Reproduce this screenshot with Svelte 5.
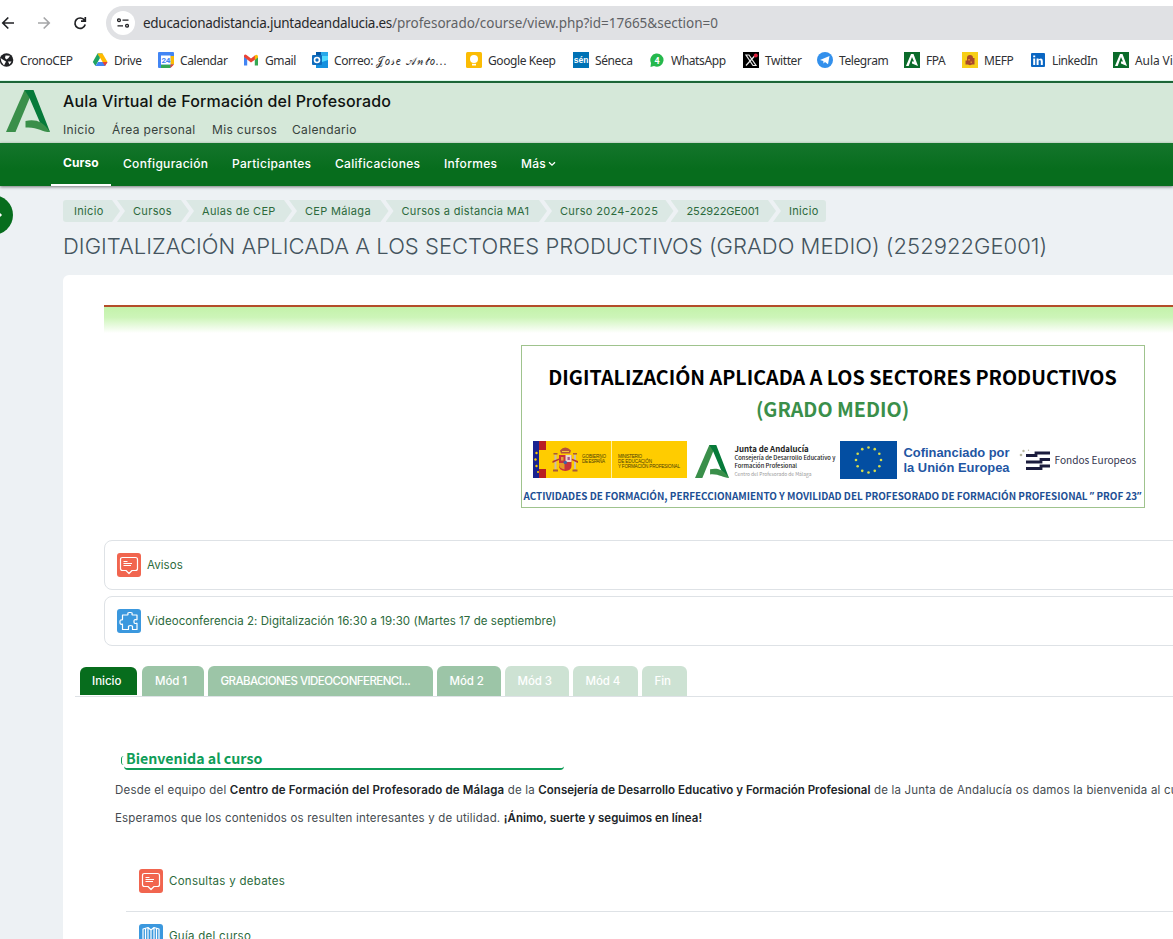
<script lang="ts">
  interface Bookmark {
    icon: string;
    label: string;
    width: number;
    script?: string;
  }

  const bookmarks: Bookmark[] = [
    { icon: "globe", label: "CronoCEP", width: 94 },
    { icon: "drive", label: "Drive", width: 66 },
    { icon: "calendar", label: "Calendar", width: 85 },
    { icon: "gmail", label: "Gmail", width: 69 },
    { icon: "outlook", label: "Correo: ", script: "𝒥𝑜𝓈𝑒 𝒜𝓃𝓉𝑜...", width: 154 },
    { icon: "keep", label: "Google Keep", width: 107 },
    { icon: "seneca", label: "Séneca", width: 76 },
    { icon: "whatsapp", label: "WhatsApp", width: 94 },
    { icon: "x", label: "Twitter", width: 74 },
    { icon: "telegram", label: "Telegram", width: 87 },
    { icon: "junta", label: "FPA", width: 58 },
    { icon: "mefp", label: "MEFP", width: 68 },
    { icon: "linkedin", label: "LinkedIn", width: 83 },
    { icon: "junta", label: "Aula Virtual", width: 90 },
  ];

  const url = {
    host: "educacionadistancia.juntadeandalucia.es",
    path: "/profesorado/course/view.php?id=17665&section=0",
  };

  const siteLinks = [
    { label: "Inicio", width: 49 },
    { label: "Área personal", width: 100 },
    { label: "Mis cursos", width: 80 },
    { label: "Calendario", width: 80 },
  ];

  const courseNav = [
    { label: "Curso", width: 60 },
    { label: "Configuración", width: 109 },
    { label: "Participantes", width: 103 },
    { label: "Calificaciones", width: 109 },
    { label: "Informes", width: 77 },
    { label: "Más", width: 60 },
  ];

  const crumbs = [
    { label: "Inicio", width: 57 },
    { label: "Cursos", width: 72 },
    { label: "Aulas de CEP", width: 106 },
    { label: "CEP Málaga", width: 99.5 },
    { label: "Cursos a distancia MA1", width: 161.5 },
    { label: "Curso 2024-2025", width: 129.5 },
    { label: "252922GE001", width: 105.5 },
    { label: "Inicio", width: 53 },
  ];

  const tabs = [
    { label: "Inicio", width: 57, kind: "active" },
    { label: "Mód 1", width: 61.5, kind: "" },
    { label: "GRABACIONES VIDEOCONFERENCI...", width: 225, kind: "long" },
    { label: "Mód 2", width: 64, kind: "" },
    { label: "Mód 3", width: 64, kind: "dimmed" },
    { label: "Mód 4", width: 65, kind: "dimmed" },
    { label: "Fin", width: 45, kind: "dimmed" },
  ];

  const stars = Array.from({ length: 12 }, (_, i) => {
    const a = (i * Math.PI) / 6;
    return { x: 28.5 + 12.5 * Math.sin(a), y: 19 - 12.5 * Math.cos(a) };
  });
</script>

{#snippet junta()}
  <path d="M18.500 0H27L9.500 42H0z" fill="#3a8f4a" />
  <path d="M18.500 0H27.500L44 42 35.500 36 23 7z" fill="#067a3a" />
  <path d="M19.500 31C29 29 37 31 44 42C36 42 31 36.500 19.500 37.500z" fill="#3a8f4a" />
{/snippet}

{#snippet favicon(name: string)}
  <svg class="favicon" viewBox="0 0 16 16">
    {#if name === "globe"}
      <circle cx="8.500" cy="8" r="6.800" fill="#202124" />
      <path d="M2.500 6 5.500 8 8 9.500 6 13.500 3.500 10zM7.500 3.500 12 3.800 10.500 6 8.500 7.500 7 6z" fill="#fff" />
      <path d="M10 9.500 13.500 9.500 11.500 12.500z" fill="#fff" />
    {:else if name === "drive"}
      <path d="M5.500 1.500H10.500L8 6z" fill="#1e9b50" />
      <path d="M5.500 1.500 8 6 3.500 14 .8 10z" fill="#1ea362" />
      <path d="M10.500 1.500 15.500 10H10.600L5.500 1.500z" fill="#ffba00" />
      <path d="M15.500 10 13 14H3.500L6 10z" fill="#4285f4" />
      <path d="M15.500 10 13 14 10.500 10z" fill="#ea4335" />
    {:else if name === "calendar"}
      <path d="M0 1Q0 0 1 0H15Q16 0 16 1V12L12 16H1Q0 16 0 15z" fill="#4285f4" />
      <path d="M3 12.500H12.500V16H3z" fill="#34a853" />
      <path d="M12.500 4H16V12.500H12.500z" fill="#fbbc04" />
      <path d="M12.500 12.500H16L12.500 16z" fill="#ea4335" />
      <path d="M3 3.500H12.500V12.500H3z" fill="#fff" />
      <text x="7.800" y="10.800" class="i-date">24</text>
    {:else if name === "gmail"}
      <path d="M1 13.500V4.500L4.200 7V13.500z" fill="#4285f4" />
      <path d="M11.800 13.500V7L15 4.500V13.500z" fill="#34a853" />
      <path d="M1 5V3.500Q2 1.800 3.800 3.200L8 6.500 12.200 3.200 12.200 7.500 8 10.500 4.200 7.500z" fill="#ea4335" />
      <path d="M11.800 3.500Q14.500 1.500 15 4.500V5.500L11.800 8z" fill="#fbbc04" />
    {:else if name === "outlook"}
      <path d="M4 0H16V14H4z" fill="#28a8ea" />
      <path d="M9 4H16V10H9z" fill="#50d9ff" />
      <path d="M4 0H9V5H4z" fill="#0358a7" />
      <path d="M4 12 16 8V16H4z" fill="#1490df" />
      <rect y="3" width="10" height="10" rx="1" fill="#0f6cbd" />
      <circle cx="5" cy="8" r="2.500" fill="none" stroke="#fff" stroke-width="1.600" />
    {:else if name === "keep"}
      <rect width="16" height="16" rx="1.500" fill="#fbbc04" />
      <circle cx="8" cy="7" r="4" fill="#fff" />
      <path d="M6 11.800H10V13.500H6z" fill="#fff" />
    {:else if name === "seneca"}
      <path d="M0 0H16V16H0z" fill="#0072b5" />
      <text x="8" y="10.500" class="i-sen">sén</text>
    {:else if name === "whatsapp"}
      <path d="M1.500 15 2 11A6.600 6.600 0 1 1 5 14z" fill="#25b84c" />
      <text x="8" y="11.500" class="i-count">4</text>
    {:else if name === "x"}
      <path d="M0 0H16V16H0z" fill="#000" />
      <path d="M3 3H6L13 13.500H10zM12.500 3 3 13.500" fill="none" stroke="#e8e8e8" stroke-width="1.200" />
      <circle cx="12.800" cy="3.500" r="2" fill="#e0203c" />
    {:else if name === "telegram"}
      <circle cx="8" cy="8" r="8" fill="#3390ec" />
      <path d="M3 8 12.500 4 11 12.300 8 10 6.500 11.500 6.300 9z" fill="#fff" />
    {:else if name === "junta"}
      <path d="M0 0H16V16H0z" fill="#0a6b2a" />
      <path d="M7 2H9.500L14 14 8 11.500V9.500L10 9.600 8 5 4.700 14H2z" fill="#fff" />
    {:else if name === "mefp"}
      <path d="M0 0H16V16H0z" fill="#f7cf17" />
      <path d="M5 6Q5 3 8 3Q11 3 11 6H12.500V12.500H10Q8 14 6 12.500H3.500V8.500H5z" fill="#a8492b" />
      <path d="M6 7H8V8.500H6zM8.500 9.500H10V11H8.500z" fill="#d9872b" />
    {:else if name === "linkedin"}
      <rect x="1" y="1" width="14" height="14" rx="1" fill="#0a66c2" />
      <path d="M3.200 6.500H5.200V13H3.200zM3.200 3.500H5.200V5.300H3.200zM6.600 6.500H8.500V7.400Q12.800 5 12.800 9V13H10.800V9.500Q10.800 7 8.600 8.500V13H6.600z" fill="#fff" />
    {/if}
  </svg>
{/snippet}

{#snippet activityIcon(kind: string)}
  <svg class="activity-icon" viewBox="0 0 24 24">
    <rect width="24" height="24" rx="3" fill={kind === "forum" ? "#f1654f" : "#3b98de"} />
    <g fill="none" stroke="#fff" stroke-width="1.200" stroke-linejoin="round">
      {#if kind === "forum"}
        <path d="M5.500 4.500H18.500Q20.500 4.500 20.500 6.500V15.500Q20.500 17.500 18.500 17.500H15L12 20.500 9 17.500H5.500Q3.500 17.500 3.500 15.500V6.500Q3.500 4.500 5.500 4.500zM6.500 8.500H10.500M6.500 10.500H15M6.500 12.500H14" />
      {:else if kind === "puzzle"}
        <path d="M5.500 6H10.500Q11 6 11 5.300Q10.300 3.500 12.500 3.500H13.500Q15.700 3.500 15 5.300Q15 6 15.500 6H20V10.500Q20 11 19.500 10.800Q17 10 17 12V13Q17 15 19.500 14.300Q20 14 20 14.700V20.500H15.500V18.500Q16 16.500 13.500 16.500Q11 16.500 11.500 18.500V20.500H5.500V15.500Q5.500 15 4.800 15.200Q3 15.700 3 13.500V12.500Q3 10.500 4.800 11Q5.500 11 5.500 10.500z" />
      {:else}
        <path d="M4 20V5L9 3.500 12 6 15 3.500 20 5V20L15 18.500 12 20.500 9 18.500zM6.500 4.500V19M9 3.500V18.500M12 6V20M15 3.500V18.500M17.500 4.500V19" />
      {/if}
    </g>
  </svg>
{/snippet}

<div class="window">
  <div class="toolbar">
    <svg class="nav-icons" viewBox="0 0 92 16" fill="none" stroke-width="1.700">
      <path d="M14 8H3M8.300 2.500 2.800 8 8.300 13.500" stroke="#202124" />
      <path d="M38 8H49M43.700 2.500 49.200 8 43.700 13.500" stroke="#a5a6a8" />
      <path d="M84.500 5.300A5.200 5.200 0 1 0 85.200 9.500M85.300 2V6.200H81" stroke="#202124" />
    </svg>
    <div class="address">
      <span class="site-info">
        <svg viewBox="0 0 12 10" fill="none" stroke="#202124" stroke-width="1.300">
          <circle cx="2" cy="2.200" r="1.400" />
          <path d="M5.500 2.200H11.500M.5 7.800H6" />
          <circle cx="10" cy="7.800" r="1.400" />
        </svg>
      </span>
      <span class="url"><b>{url.host}</b>{url.path}</span>
    </div>
  </div>

  <div class="bookmarks">
    {#each bookmarks as bookmark}
      <div class="bookmark" style:width="{bookmark.width}px">
        {@render favicon(bookmark.icon)}
        <span>{bookmark.label}{#if bookmark.script}<i>{bookmark.script}</i>{/if}</span>
      </div>
    {/each}
  </div>

  <header class="site-header">
    <svg class="site-logo" viewBox="0 0 44 42">{@render junta()}</svg>
    <div>
      <div class="site-title">Aula Virtual de Formación del Profesorado</div>
      <nav class="site-links">
        {#each siteLinks as link}
          <span style:width="{link.width}px">{link.label}</span>
        {/each}
      </nav>
    </div>
  </header>

  <nav class="course-nav">
    {#each courseNav as item, i}
      <div class="course-link" class:active={i === 0} style:width="{item.width}px">
        <span>{item.label}</span>
        {#if item.label === "Más"}
          <svg class="caret" viewBox="0 0 8 6"><path d="M1 1.200 4 4.200 7 1.200" fill="none" stroke="#fff" stroke-width="1.300" /></svg>
        {/if}
      </div>
    {/each}
  </nav>

  <div class="page">
    <div class="drawer-toggle">
      <svg viewBox="0 0 6 8"><path d="M1 1 4 4 1 7" fill="none" stroke="#fff" stroke-width="1.500" /></svg>
    </div>

    <div class="breadcrumb">
      {#each crumbs as crumb, i}
        <div class="crumb" class:first={i === 0} class:last={i === crumbs.length - 1} style:width="{crumb.width}px">
          <span>{crumb.label}</span>
        </div>
      {/each}
    </div>

    <h1>DIGITALIZACIÓN APLICADA A LOS SECTORES PRODUCTIVOS (GRADO MEDIO) (252922GE001)</h1>

    <main class="card">
      <div class="stripe"></div>

      <div class="banner">
        <div class="banner-title">DIGITALIZACIÓN APLICADA A LOS SECTORES PRODUCTIVOS</div>
        <div class="banner-level">(GRADO MEDIO)</div>
        <div class="logos">
          <svg class="gob" viewBox="0 0 154 37">
            <path d="M0 0H154V37H0z" fill="#fc0" />
            <path d="M0 0H6V37H0z" fill="#1a2390" />
            <path d="M6 0H13V9H6zM6 28H13V37H6z" fill="#b81f24" />
            <g fill="#fc0"><circle cx="3.500" cy="12" r="1.200" /><circle cx="2.500" cy="18.500" r="1.200" /><circle cx="3.500" cy="25" r="1.200" /><circle cx="5" cy="31" r="1" /></g>
            <path d="M78.500 0V37" stroke="#fff0a0" stroke-width="1" />
            <path d="M27 9.500Q32 3.500 38 9.500L37 12.500H28z" fill="#b5533a" />
            <path d="M29 10.500H36" stroke="#f3c43a" />
            <path d="M21.500 14H23.500V28H21.500zM41 14H43V28H41z" fill="#c9bcae" />
            <path d="M20 28.500H25V30.500H20zM39.500 28.500H44.500V30.500H39.500zM20.500 12H24.500V13.500H20.500zM40 12H44V13.500H40z" fill="#a85a3a" />
            <path d="M19.500 20 26 17.500V19L19.500 22zM38.500 17.500 45 20V22L38.500 19z" fill="#b33a34" />
            <path d="M26 14H38.500V25Q38.500 29.500 32.300 30Q26 29.500 26 25z" fill="#c8323a" />
            <path d="M32.500 14H38.500V21H32.500z" fill="#ead6d0" />
            <path d="M26 22H31.500V28.500Q26 27 26 24z" fill="#e59a24" />
            <path d="M28 16H30.500V19.500H28z" fill="#e3a33a" />
            <path d="M34.500 16H36.800V19H34.500z" fill="#a8568a" />
            <circle cx="32.300" cy="21.500" r="1.800" fill="#4462a0" />
            <text x="49" y="17" textLength="24">GOBIERNO</text>
            <text x="49" y="22.300" textLength="23">DE ESPAÑA</text>
            <text x="85" y="17" textLength="24">MINISTERIO</text>
            <text x="85" y="22" textLength="34">DE EDUCACIÓN</text>
            <text x="85" y="26.800" textLength="62">Y FORMACIÓN PROFESIONAL</text>
          </svg>
          <svg class="junta-logo" viewBox="0 0 44 42" preserveAspectRatio="none">{@render junta()}</svg>
          <div class="junta-text">
            <strong>Junta de Andalucía</strong>
            <span>Consejería de Desarrollo Educativo y</span>
            <span>Formación Profesional</span>
            <em>Centro del Profesorado de Málaga</em>
          </div>
          <svg class="eu" viewBox="0 0 57 38">
            <path d="M0 0H57V38H0z" fill="#034ea2" />
            {#each stars as star}
              <circle cx={star.x} cy={star.y} r="1.300" fill="#d8dd4a" />
            {/each}
          </svg>
          <div class="eu-text">Cofinanciado por<br />la Unión Europea</div>
          <svg class="fondos" viewBox="0 0 32 22">
            <g fill="none" stroke="#1b1c3d" stroke-width="2.800">
              <path d="M7 6.500H17V4H31M7 13H22V10.500H31M7 19.500H22V17H31" />
            </g>
            <g fill="#b9b8a0"><circle cx="2" cy="6" r="1.300" /><circle cx="4.500" cy="2" r="1.200" /><circle cx="9.500" cy="1.200" r=".7" /></g>
          </svg>
          <div class="fondos-text">Fondos Europeos</div>
        </div>
        <div class="banner-foot">ACTIVIDADES DE FORMACIÓN, PERFECCIONAMIENTO Y MOVILIDAD DEL PROFESORADO DE FORMACIÓN PROFESIONAL <q>”</q> PROF 23<q>”</q></div>
      </div>

      <div class="activity">
        {@render activityIcon("forum")}
        <span>Avisos</span>
      </div>
      <div class="activity">
        {@render activityIcon("puzzle")}
        <span>Videoconferencia 2: Digitalización 16:30 a 19:30 (Martes 17 de septiembre)</span>
      </div>

      <div class="tabs">
        {#each tabs as tab}
          <div class="tab {tab.kind}" style:width="{tab.width}px">{tab.label}</div>
        {/each}
      </div>

      <section class="welcome">
        <h2>Bienvenida al curso</h2>
        <p>
          Desde el equipo del <b class="center">Centro de Formación del Profesorado de Málaga</b> de la <b>Consejería de Desarrollo Educativo y Formación Profesional</b> de la Junta de Andalucía os damos la bienvenida al curso
        </p>
        <p class="outro">
          Esperamos que los contenidos os resulten interesantes y de utilidad. <b>¡Ánimo, suerte y seguimos en línea!</b>
        </p>
        <div class="row">
          {@render activityIcon("forum")}
          <span>Consultas y debates</span>
        </div>
        <div class="row">
          {@render activityIcon("book")}
          <span>Guía del curso</span>
        </div>
      </section>
    </main>
  </div>
</div>

<style>
  :global(body) {
    background: #fff;
    overflow: hidden;
  }

  .window {
    width: 1173px;
    height: 939px;
    overflow: hidden;
    font-family: Inter, "Open Sans", sans-serif;
    white-space: nowrap;
  }

  svg {
    display: block;
    flex: none;
  }

  .toolbar {
    display: flex;
    height: 34px;
    padding-top: 6px;
    align-items: center;
  }

  .nav-icons {
    width: 92px;
    height: 16px;
    margin-right: 14px;
  }

  .address {
    flex: 1;
    height: 34px;
    display: flex;
    align-items: center;
    background: #e0e1e4;
    border-radius: 17px 0 0 17px;
    font-family: "Noto Sans", sans-serif;
    font-size: 13.5px;
    letter-spacing: -0.02px;
    color: #5f6165;
  }

  .site-info {
    width: 24px;
    height: 24px;
    margin: 0 8px 0 5px;
    background: #fff;
    border-radius: 50%;
    display: grid;
    place-items: center;
  }

  .site-info svg {
    width: 12px;
    height: 10px;
  }

  .url b {
    font-weight: 400;
    letter-spacing: -0.28px;
    color: #28292b;
  }

  .bookmarks {
    display: flex;
    height: 40px;
    margin-left: -2px;
    align-items: center;
    border-bottom: 1px solid #e0faee;
    font-family: "Noto Sans", sans-serif;
    font-size: 12px;
    letter-spacing: -0.4px;
    color: #303134;
  }

  .bookmark {
    display: flex;
    align-items: center;
    gap: 6px;
    flex: none;
  }

  .bookmark:last-child {
    letter-spacing: -0.1px;
  }

  .bookmark i {
    font-style: normal;
    font-size: 11px;
    letter-spacing: 1px;
  }

  .favicon {
    width: 16px;
    height: 16px;
  }

  .i-date {
    font: 700 8px Roboto, sans-serif;
    fill: #4285f4;
    text-anchor: middle;
  }

  .i-sen {
    font: 700 8.5px "Liberation Sans", sans-serif;
    fill: #fff;
    text-anchor: middle;
    letter-spacing: 0;
  }

  .i-count {
    font: 700 9px Roboto, sans-serif;
    fill: #fff;
    text-anchor: middle;
  }

  .site-header {
    height: 60px;
    border-top: 2px solid #1c6638;
    background: #d5e8d9;
    display: flex;
    gap: 13px;
  }

  .site-logo {
    width: 44px;
    height: 42px;
    margin: 7px 0 0 6px;
  }

  .site-title {
    margin-top: 7px;
    line-height: 22px;
    font-size: 16px;
    letter-spacing: 0.13px;
    font-weight: 500;
    color: #101411;
  }

  .site-links {
    display: flex;
    margin-top: 9px;
    line-height: 18px;
    font-size: 12px;
    letter-spacing: 0.35px;
    color: #37423c;
  }

  .site-links span {
    flex: none;
  }

  .course-nav {
    position: relative;
    height: 43px;
    padding-left: 51px;
    display: flex;
    background: linear-gradient(#14752c, #076d1d 60%);
    box-shadow: 0 1px 3px rgba(0, 0, 0, 0.5);
    color: #fff;
    font-size: 12px;
    letter-spacing: 0.3px;
    font-weight: 500;
    z-index: 1;
  }

  .course-link {
    box-sizing: border-box;
    height: 43px;
    flex: none;
    padding: 0 0 2px 12px;
    display: flex;
    align-items: center;
    gap: 2px;
  }

  .course-link.active {
    border-bottom: 2px solid #fff;
    font-weight: 700;
    letter-spacing: 0.1px;
  }

  .caret {
    width: 8px;
    height: 6px;
  }

  .page {
    position: relative;
    padding: 14px 0 0 63px;
    background: #edf1f4;
  }

  .drawer-toggle {
    position: absolute;
    left: -28px;
    top: 9px;
    width: 41px;
    height: 40px;
    border-radius: 50%;
    background: #076d1d;
    display: flex;
    align-items: center;
    justify-content: flex-end;
  }

  .drawer-toggle svg {
    width: 6px;
    height: 8px;
    margin-right: 10px;
  }

  .breadcrumb {
    display: flex;
    height: 22px;
    font-size: 11px;
    letter-spacing: 0.33px;
    color: #2c6a3c;
  }

  .crumb {
    box-sizing: border-box;
    flex: none;
    height: 22px;
    line-height: 22px;
    padding-left: 16px;
    background: #dbe8e4;
    clip-path: polygon(0 0, calc(100% - 8px) 0, 100% 50%, calc(100% - 8px) 100%, 0 100%, 8px 50%);
    margin-right: -3px;
  }

  .crumb:nth-child(7) {
    letter-spacing: -0.1px;
  }

  .crumb.first {
    padding-left: 11px;
    border-radius: 3px 0 0 3px;
    clip-path: polygon(0 0, calc(100% - 8px) 0, 100% 50%, calc(100% - 8px) 100%, 0 100%);
  }

  .crumb.last {
    border-radius: 0 3px 3px 0;
    clip-path: polygon(0 0, 100% 0, 100% 100%, 0 100%, 8px 50%);
  }

  h1 {
    margin: 8px 0 0;
    line-height: 32px;
    font-size: 22px;
    letter-spacing: 0.03px;
    font-weight: 300;
    color: #44545e;
  }

  .card {
    margin-top: 13px;
    height: 700px;
    background: #fff;
    border-radius: 6px 0 0 0;
    padding: 30px 0 0 41px;
  }

  .stripe {
    height: 26px;
    border-top: 2px solid #b34d29;
    background: linear-gradient(#c3f2aa, #cdf5b9 40%, #fff);
  }

  .banner {
    box-sizing: border-box;
    width: 624px;
    height: 163px;
    margin: 12px 0 32px 416.5px;
    border: 1px solid #9fc38d;
    font-family: "Noto Sans CJK SC", sans-serif;
    font-weight: 700;
    text-align: center;
  }

  .banner-title {
    margin-top: 15px;
    line-height: 32px;
    font-size: 19.7px;
    color: #000;
  }

  .banner-level {
    line-height: 32px;
    font-size: 19.7px;
    color: #3a8f4a;
  }

  .logos {
    display: flex;
    height: 38px;
    margin: 16px 0 0 11px;
    text-align: left;
  }

  .gob {
    width: 154px;
    height: 37px;
  }

  .gob text {
    font: 400 4.6px "Liberation Sans", sans-serif;
    fill: #4a3c08;
  }

  .junta-logo {
    width: 34px;
    height: 33px;
    margin: 4px 6px 0 8px;
  }

  .junta-text {
    width: 105px;
    display: flex;
    flex-direction: column;
    font-weight: 500;
    font-size: 5.8px;
    line-height: 8px;
    color: #222;
  }

  .junta-text strong {
    font-size: 7.9px;
    line-height: 10px;
    margin-top: 3px;
  }

  .junta-text em {
    font-style: normal;
    font-weight: 400;
    font-size: 4.9px;
    line-height: 7px;
    color: #999;
  }

  .eu {
    width: 57px;
    height: 38px;
  }

  .eu-text {
    width: 115px;
    margin: 4px 0 0 7px;
    font-family: "Liberation Sans", sans-serif;
    font-size: 12.9px;
    line-height: 15px;
    color: #1f56a3;
  }

  .fondos {
    width: 32px;
    height: 22px;
    margin: 8px 4px 0 0;
  }

  .fondos-text {
    font-size: 10.1px;
    font-weight: 400;
    line-height: 38px;
    color: #33344e;
  }

  .banner-foot {
    margin-top: 8px;
    line-height: 18px;
    font-size: 9.88px;
    color: #1d4f94;
  }

  .banner-foot q {
    font-family: "Open Sans", sans-serif;
    quotes: none;
  }

  .activity {
    box-sizing: border-box;
    width: 1200px;
    height: 50px;
    margin-bottom: 6px;
    padding-left: 12px;
    border: 1px solid #dee2e6;
    border-radius: 8px;
    display: flex;
    align-items: center;
    gap: 6px;
    font-size: 11.5px;
    letter-spacing: 0.06px;
    color: #2c6a3c;
  }

  .activity-icon {
    width: 24px;
    height: 24px;
  }

  .tabs {
    display: flex;
    gap: 4px;
    height: 30px;
    margin: 20px 0 0 -29px;
    padding-left: 5px;
    border-bottom: 1px solid #dee2e6;
  }

  .tab {
    box-sizing: border-box;
    flex: none;
    height: 30px;
    line-height: 30px;
    padding-left: 13px;
    border-radius: 6px 6px 0 0;
    background: #9cc5a7;
    color: #fff;
    font-size: 11.5px;
    letter-spacing: -0.1px;
    font-weight: 500;
  }

  .tab.active {
    height: 28px;
    margin: 1px 1px 0 0;
    padding-left: 12px;
    line-height: 28px;
    letter-spacing: 0;
    background: #076d1d;
  }

  .tab.long {
    letter-spacing: -0.55px;
  }

  .tab.dimmed {
    background: #cde2d3;
  }

  .welcome {
    padding: 50px 0 0 11px;
    font-size: 11.5px;
    letter-spacing: 0.19px;
    color: #454b50;
  }

  h2 {
    position: relative;
    width: 440px;
    height: 23px;
    box-sizing: border-box;
    margin: 0 0 10px 9px;
    padding-left: 2px;
    line-height: 22px;
    font-family: "Noto Sans CJK SC", sans-serif;
    font-size: 14.2px;
    letter-spacing: 0;
    font-weight: 700;
    color: #0f9d58;
    border-bottom: 2px solid #0f9d58;
    border-radius: 0 0 4px 4px;
  }

  h2::before {
    content: "";
    position: absolute;
    left: -3px;
    top: 9px;
    width: 2px;
    height: 9px;
    border-left: 1px solid #0f9d58;
    border-radius: 3px 0 0 3px;
  }

  p {
    margin: 0 0 8px;
    line-height: 20px;
  }

  p b {
    font-weight: 600;
    letter-spacing: 0.01px;
    color: #212529;
  }

  p b.center {
    letter-spacing: 0.15px;
  }

  .outro {
    margin-bottom: 29px;
  }

  .row {
    height: 48px;
    margin-left: 11px;
    padding-left: 13px;
    display: flex;
    align-items: center;
    gap: 6px;
    letter-spacing: 0.27px;
    color: #2c6a3c;
  }

  .row + .row {
    margin-top: 6px;
    border-top: 1px solid #dee2e6;
  }
</style>
